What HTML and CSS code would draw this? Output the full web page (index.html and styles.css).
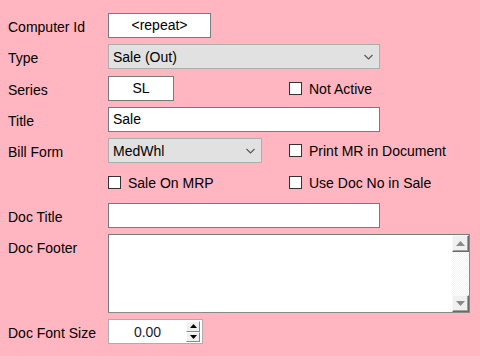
FILE: index.html
```html
<!DOCTYPE html>
<html lang="en">
<head>
    <meta charset="UTF-8">
    <title>Series Setup</title>
    <link rel="stylesheet" href="styles.css">
</head>
<body>
    <div class="form">
        <div class="lbl">Computer Id</div>
        <div class="txt center w-id">&lt;repeat&gt;</div>

        <div class="lbl">Type</div>
        <div class="combo span w-wide">
            <span class="combo-text">Sale (Out)</span>
            <svg class="chev" width="9" height="6" viewBox="0 0 9 6"><path d="M0.5 1 L4.5 5 L8.5 1" fill="none" stroke="#555" stroke-width="1.1"/></svg>
        </div>

        <div class="lbl">Series</div>
        <div class="txt center w-series">SL</div>
        <div class="check"><span class="box"></span>Not Active</div>

        <div class="lbl">Title</div>
        <div class="txt span w-wide">Sale</div>

        <div class="lbl">Bill Form</div>
        <div class="combo w-bill">
            <span class="combo-text">MedWhl</span>
            <svg class="chev" width="9" height="6" viewBox="0 0 9 6"><path d="M0.5 1 L4.5 5 L8.5 1" fill="none" stroke="#555" stroke-width="1.1"/></svg>
        </div>
        <div class="check"><span class="box"></span>Print MR in Document</div>

        <div class="check col2"><span class="box"></span>Sale On MRP</div>
        <div class="check"><span class="box"></span>Use Doc No in Sale</div>

        <div class="lbl">Doc Title</div>
        <div class="txt span w-wide"></div>

        <div class="lbl">Doc Footer</div>
        <div class="memo span">
            <div class="memo-body"></div>
            <div class="vscroll">
                <div class="sbtn"><svg width="9" height="5" viewBox="0 0 9 5"><path d="M0 5 L4.5 0 L9 5 Z" fill="#8a8a8a"/></svg></div>
                <div class="strack"></div>
                <div class="sbtn"><svg width="9" height="5" viewBox="0 0 9 5"><path d="M0 0 L4.5 5 L9 0 Z" fill="#8a8a8a"/></svg></div>
            </div>
        </div>

        <div class="lbl">Doc Font Size</div>
        <div class="spin">
            <span class="spin-text">0.00</span>
            <div class="spin-btns">
                <div class="spin-btn"><svg width="7" height="4" viewBox="0 0 7 4"><path d="M0 4 L3.5 0 L7 4 Z" fill="#000"/></svg></div>
                <div class="spin-btn"><svg width="7" height="4" viewBox="0 0 7 4"><path d="M0 0 L3.5 4 L7 0 Z" fill="#000"/></svg></div>
            </div>
        </div>
    </div>
</body>
</html>
```

FILE: styles.css
```css
body {
    margin: 0;
    background-color: #ffb6c1;
    font-family: "Liberation Sans", Arial, sans-serif;
    font-size: 14px;
    color: #000;
}

.form {
    display: grid;
    grid-template-columns: 100px 181px auto;
    grid-template-rows: 31px 32px 31px 31px 32px 33px 31px 85px 25px;
    align-items: start;
    padding: 13px 0 0 8px;
}

.lbl {
    grid-column: 1;
    padding-top: 2px;
    line-height: 25px;
    white-space: nowrap;
}

.col2 {
    grid-column: 2;
}

.span {
    grid-column: 2 / span 2;
}

.txt {
    box-sizing: border-box;
    height: 25px;
    line-height: 23px;
    padding: 0 4px;
    background-color: #fff;
    border: 1px solid #7a7a7a;
    white-space: nowrap;
}

.center {
    text-align: center;
}

.w-id {
    width: 103px;
}

.w-series {
    width: 66px;
}

.w-wide {
    width: 272px;
}

.w-bill {
    width: 154px;
}

.combo {
    box-sizing: border-box;
    height: 25px;
    display: flex;
    align-items: center;
    justify-content: space-between;
    padding: 0 6px 0 4px;
    background-color: #e1e1e1;
    border: 1px solid #adadad;
}

.chev {
    display: block;
}

.check {
    height: 25px;
    display: flex;
    align-items: center;
    gap: 7px;
    white-space: nowrap;
}

.box {
    box-sizing: border-box;
    width: 13px;
    height: 13px;
    background-color: #fff;
    border: 1px solid #333;
}

.memo {
    box-sizing: border-box;
    width: 362px;
    height: 79px;
    display: flex;
    background-color: #fff;
    border: 1px solid #7a7a7a;
    border-right-color: #8a8a8a;
    border-bottom-color: #8a8a8a;
}

.memo-body {
    flex: 1;
}

.vscroll {
    width: 17px;
    display: flex;
    flex-direction: column;
    background: repeating-conic-gradient(#fff 0 25%, #f3f3f3 0 50%) 0 0 / 2px 2px;
}

.sbtn {
    box-sizing: border-box;
    height: 17px;
    display: flex;
    align-items: center;
    justify-content: center;
    background-color: #f0f0f0;
    border: 1px solid;
    border-color: #f8f8f8 #696969 #696969 #f8f8f8;
    box-shadow: inset -1px -1px 0 #a0a0a0;
}

.strack {
    flex: 1;
}

.spin {
    box-sizing: border-box;
    width: 95px;
    height: 25px;
    display: flex;
    align-items: center;
    background-color: #fff;
    border: 1px solid #adadad;
    padding: 1px 2px 1px 0;
}

.spin-text {
    flex: 1;
    text-align: center;
    color: #1a1a2a;
}

.spin-btns {
    width: 14px;
    height: 21px;
    display: flex;
    flex-direction: column;
}

.spin-btn {
    box-sizing: border-box;
    flex: 1;
    display: flex;
    align-items: center;
    justify-content: center;
    background-color: #f0f0f0;
    border: 1px solid;
    border-color: #fff #888 #888 #fff;
}
```
